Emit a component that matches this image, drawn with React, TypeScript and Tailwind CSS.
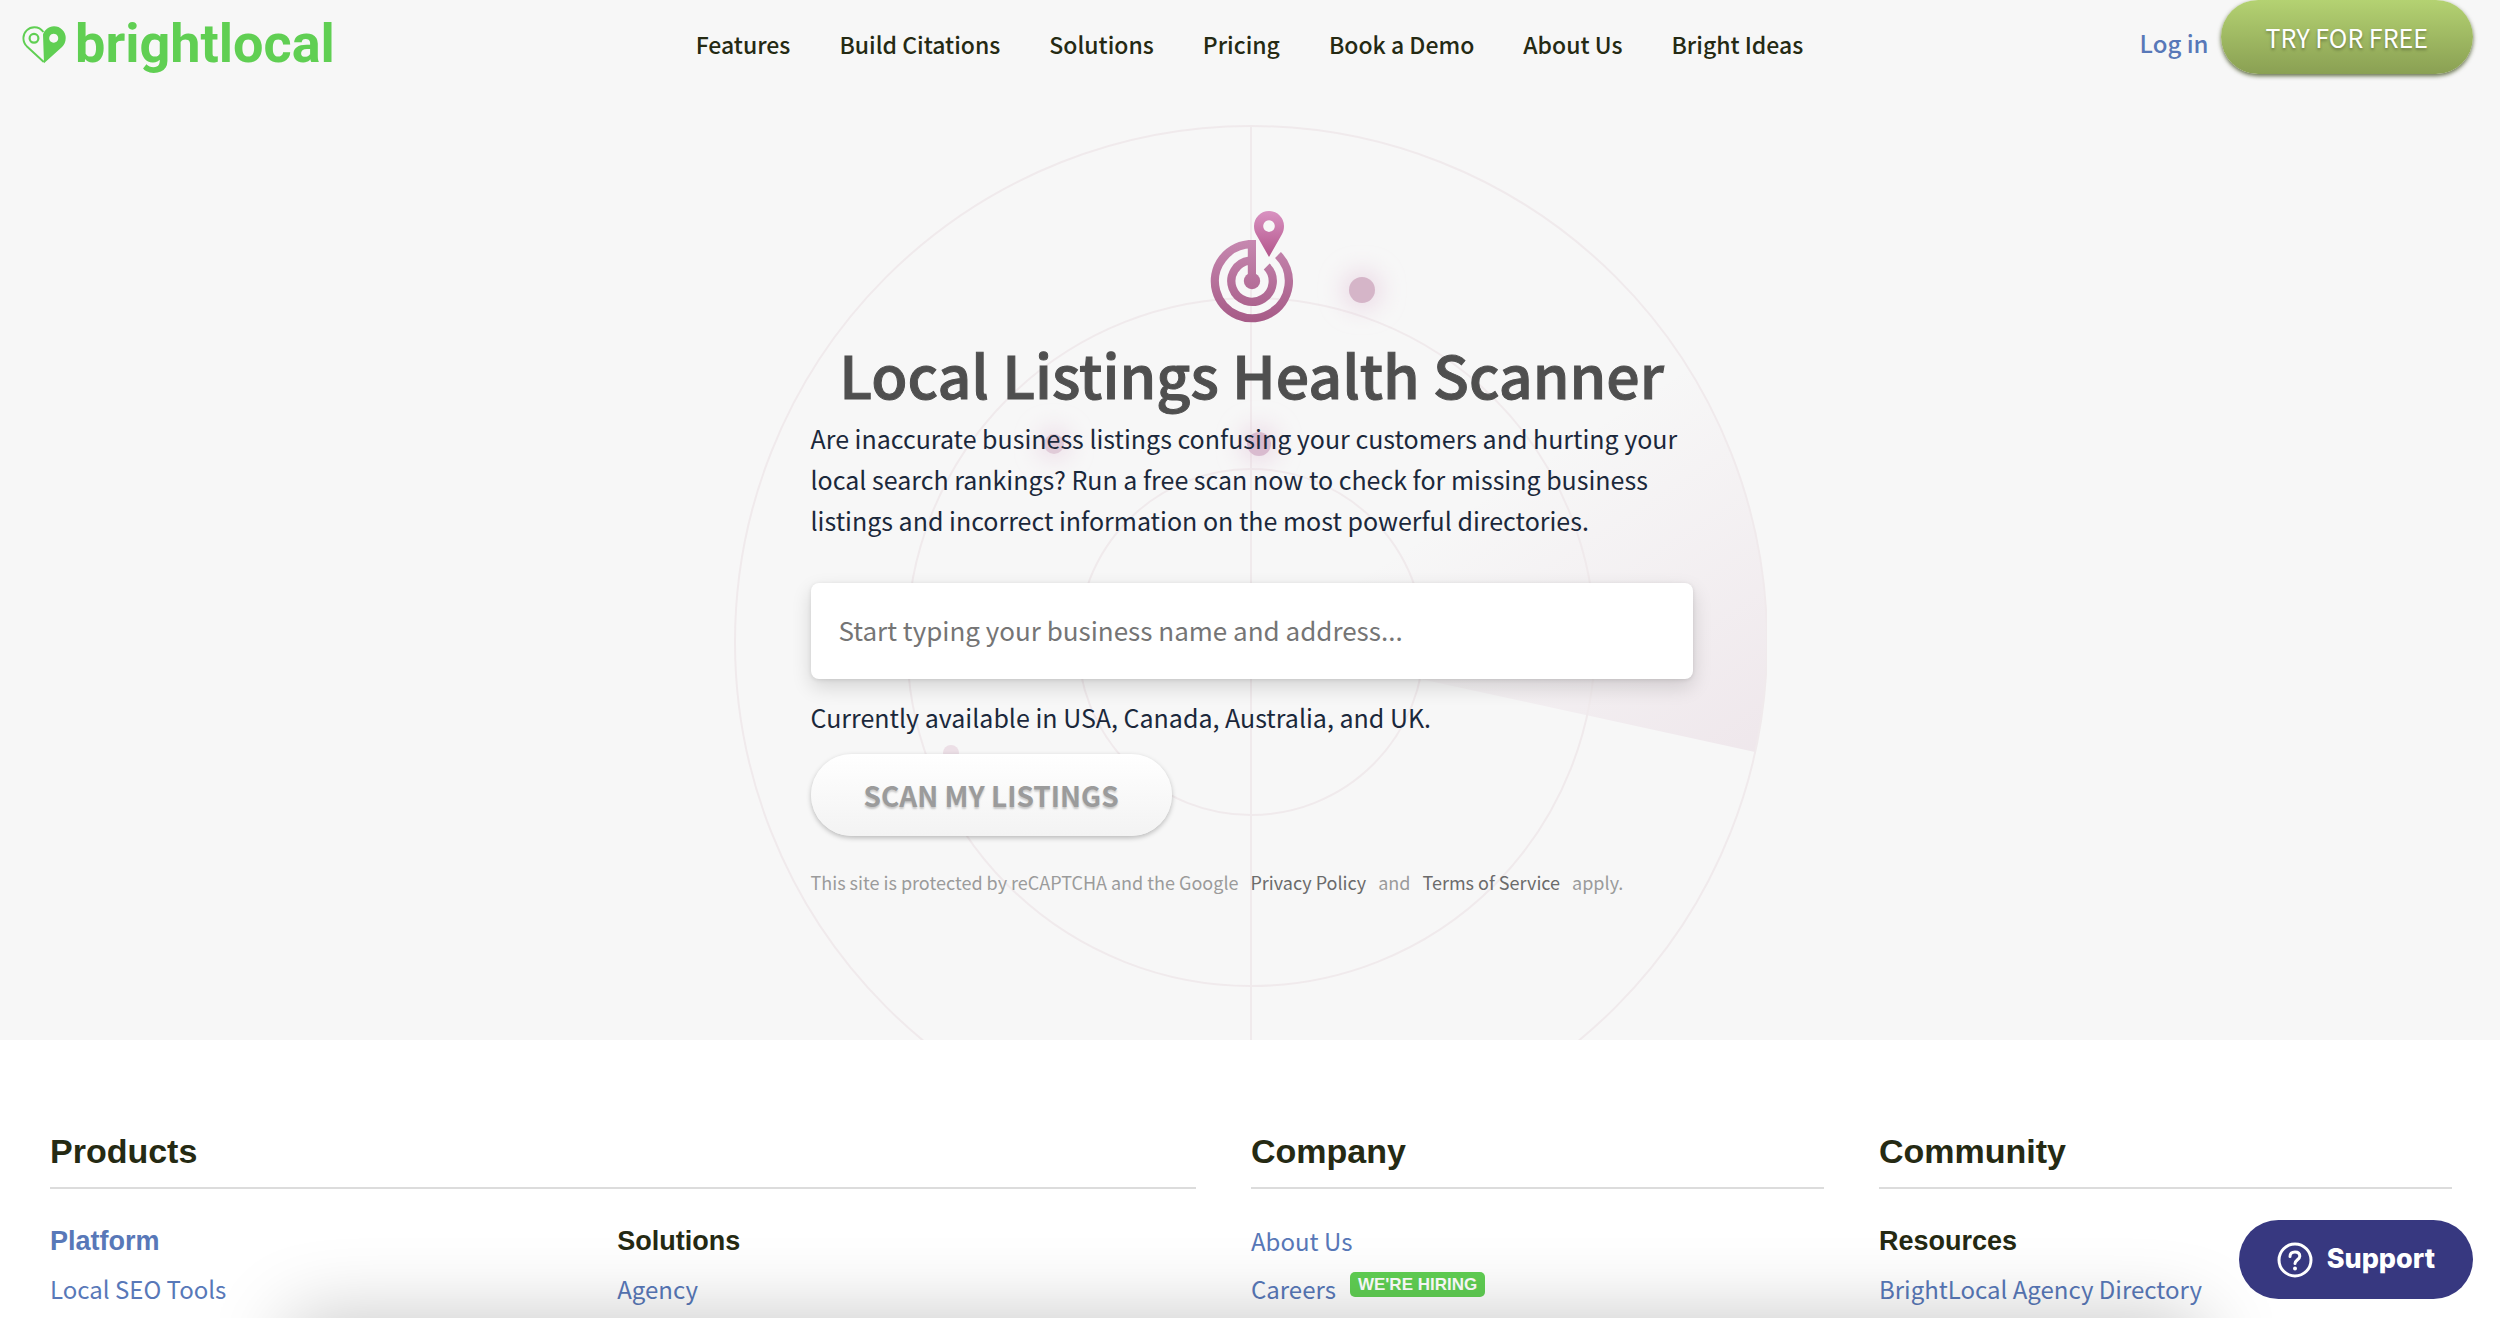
const navItems = ["Features", "Build Citations", "Solutions", "Pricing", "Book a Demo", "About Us", "Bright Ideas"];

function HeartPin() {
  return (
    <svg className="w-[45px] h-[39px]" viewBox="22 24 45 39" fill="none" aria-hidden="true">
      <path
        d="M43.4 31C41 27.6 38 26.2 34.4 26.2A11 11 0 0 0 23.4 37C23.4 41 25 43.5 26.7 45.2L43.8 61"
        stroke="#60cf53"
        strokeWidth="1.9"
      />
      <circle cx="34" cy="37.3" r="4.4" stroke="#60cf53" strokeWidth="2.2" />
      <path
        d="M44 62.3L43 33.5C44.5 29 48.5 25.3 54 25.3A11.7 11.7 0 0 1 65.7 37C65.7 41 64.2 43.7 62 46ZM53.7 32.7a4.5 4.5 0 1 0 0.01 0Z"
        fill="#60cf53"
        fillRule="evenodd"
      />
    </svg>
  );
}

function TargetIcon() {
  return (
    <svg className="w-[84px] h-[114px] mx-auto" viewBox="1209 210 84 114" fill="none" aria-hidden="true">
      <defs>
        <linearGradient id="pin" x1="0" y1="211" x2="0" y2="257" gradientUnits="userSpaceOnUse">
          <stop stopColor="#d992c1" />
          <stop offset="1" stopColor="#b3558b" />
        </linearGradient>
        <linearGradient id="rings" x1="0" y1="240" x2="0" y2="323" gradientUnits="userSpaceOnUse">
          <stop stopColor="#c688b0" />
          <stop offset="1" stopColor="#a65a86" />
        </linearGradient>
      </defs>
      <g stroke="url(#rings)" strokeWidth="8.3">
        <path d="M1255 244.2H1251A37 37 0 1 0 1277 255" />
        <path d="M1248.5 260.6A20.7 20.7 0 1 0 1265.7 266.5" />
      </g>
      <rect x="1246.8" y="240.1" width="8.2" height="41" fill="url(#rings)" />
      <circle cx="1251" cy="281" r="8.2" fill="url(#rings)" />
      <path
        d="M1268 257L1255.2 234.5C1253.7 232 1253 229 1253 226A15 15 0 0 1 1283 226C1283 229 1282.3 232 1280.8 234.5ZM1268 220.3a5.8 5.8 0 1 0 0.01 0Z"
        fill="url(#pin)"
        fillRule="evenodd"
      />
    </svg>
  );
}

function Radar() {
  return (
    <svg
      className="absolute top-[125px] left-1/2 -translate-x-1/2 w-[1034px] h-[1034px]"
      viewBox="-518 -517 1034 1034"
      fill="none"
      aria-hidden="true"
    >
      <defs>
        <linearGradient id="sweep" x1="504" y1="110" x2="307" y2="-197" gradientUnits="userSpaceOnUse">
          <stop stopColor="#a65a86" stopOpacity="0.1" />
          <stop offset="1" stopColor="#a65a86" stopOpacity="0" />
        </linearGradient>
        <filter id="glow" x="-200%" y="-200%" width="500%" height="500%">
          <feGaussianBlur stdDeviation="12" />
        </filter>
      </defs>
      <path d="M0 0L504 110A516 516 0 0 0 434 -279Z" fill="url(#sweep)" />
      <g stroke="#f0eaec" strokeWidth="2">
        <circle r="516" />
        <circle r="344" />
        <circle r="173" />
        <path d="M0 -516V516" />
      </g>
      <g fill="#e3c5d8" fillOpacity="0.6" filter="url(#glow)">
        <circle cx="111" cy="-352" r="19" />
        <circle cx="-197" cy="-198" r="15" />
        <circle cx="8" cy="-198" r="18" />
      </g>
      <circle cx="111" cy="-352" r="13" fill="#d5b5c8" />
      <circle cx="-197" cy="-198" r="10" fill="#e0cbd8" />
      <circle cx="8" cy="-198" r="12" fill="#d9bbcf" />
      <circle cx="-300" cy="111" r="8" fill="#ecdfe6" />
    </svg>
  );
}

function Header() {
  return (
    <header className="relative grid grid-cols-[1fr_auto_1fr] items-center h-[88px] pl-[22px] pr-[27px]">
      <a href="#" className="flex items-center gap-2 text-[#60cf53]">
        <HeartPin />
        <span className="font-['Roboto',sans-serif] font-bold text-[54px] leading-[62px]">brightlocal</span>
      </a>
      <nav className="flex gap-[49px] pl-1 text-[23px] leading-8 font-medium text-[#252a13]">
        {navItems.map((item) => (
          <a key={item} href="#">{item}</a>
        ))}
      </nav>
      <div className="flex justify-end items-center gap-3 self-start">
        <a href="#" className="text-2xl font-medium text-[#5878b8] pt-3">Log in</a>
        <button className="h-[74px] px-[45px] pt-[2px] rounded-full bg-linear-to-b from-[#b4d272] to-[#8aa053] text-[25px] text-white [text-shadow:0_2px_3px_rgba(0,0,0,0.3)] shadow-[0_2px_4px_rgba(60,75,25,0.8)]">
          TRY FOR FREE
        </button>
      </div>
    </header>
  );
}

function Scanner() {
  return (
    <div className="relative pl-[3px]">
      <main className="w-[882px] mx-auto pt-[122px] pb-36 text-[25px] leading-[41px] text-[#1b283b]">
        <TargetIcon />
        <h1 className="mt-[10px] mb-1 text-center text-[59px] leading-[80px] font-medium text-[#4f4f4f] [-webkit-text-stroke:1px_#4f4f4f]">
          Local Listings Health Scanner
        </h1>
        <p>
          Are inaccurate business listings confusing your customers and hurting your local search
          rankings? Run a free scan now to check for missing business listings and incorrect
          information on the most powerful directories.
        </p>
        <form onSubmit={(e) => e.preventDefault()}>
          <input
            type="text"
            aria-label="Business name and address"
            placeholder="Start typing your business name and address..."
            className="block w-full h-24 mt-[42px] px-7 pb-1 rounded-lg bg-white text-[26px] placeholder:text-[#757575] shadow-[0_8px_20px_rgba(0,0,0,0.14),0_1px_4px_rgba(0,0,0,0.1)]"
          />
          <p className="mt-[18px]">Currently available in USA, Canada, Australia, and UK.</p>
          <button
            type="submit"
            className="block h-[82px] mt-4 px-[53px] rounded-full bg-linear-to-b from-white to-[#f3f3f3] text-[28px] font-bold text-[#9b9b9b] [text-shadow:0_2px_2px_rgba(0,0,0,0.2)] shadow-[0_2px_5px_rgba(0,0,0,0.25)]"
          >
            SCAN MY LISTINGS
          </button>
        </form>
        <p className="flex gap-3 mt-8 text-lg leading-7 text-[#9b9b9b]">
          This site is protected by reCAPTCHA and the Google
          <a href="#" className="text-[#6b6b6b]">Privacy Policy</a>
          and
          <a href="#" className="text-[#6b6b6b]">Terms of Service</a>
          apply.
        </p>
      </main>
    </div>
  );
}

const colTitle = "pb-3 border-b-2 border-[#dcdcdc] font-['Liberation_Sans',sans-serif] text-[34px] leading-[48px] font-bold text-[#252a13]";
const listTitle = "font-['Liberation_Sans',sans-serif] text-[27px] font-bold";

function Footer() {
  return (
    <footer className="grid grid-cols-[2fr_1fr_1fr] gap-[55px] pl-[50px] pr-12 pt-[87px] text-2xl leading-[48px] text-[#5878b8]">
      <section>
        <h2 className={colTitle}>Products</h2>
        <div className="grid grid-cols-[99fr_101fr] mt-7">
          <div>
            <h3 className={listTitle}><a href="#">Platform</a></h3>
            <a href="#">Local SEO Tools</a>
          </div>
          <div>
            <h3 className={`${listTitle} text-[#252a13]`}>Solutions</h3>
            <a href="#">Agency</a>
          </div>
        </div>
      </section>
      <section>
        <h2 className={colTitle}>Company</h2>
        <ul className="mt-7">
          <li><a href="#">About Us</a></li>
          <li className="flex gap-[14px]">
            <a href="#">Careers</a>
            <span className="self-start mt-[7px] px-2 rounded-[5px] bg-[#60cf53] font-['Liberation_Sans',sans-serif] text-[17px] leading-[25px] font-bold text-white">
              WE'RE HIRING
            </span>
          </li>
        </ul>
      </section>
      <section>
        <h2 className={colTitle}>Community</h2>
        <div className="mt-7">
          <h3 className={`${listTitle} text-[#252a13]`}>Resources</h3>
          <a href="#">BrightLocal Agency Directory</a>
        </div>
      </section>
    </footer>
  );
}

export default function App() {
  return (
    <div className="relative h-screen overflow-hidden bg-white font-['Noto_Sans_CJK_SC',sans-serif]">
      <div className="relative overflow-hidden bg-[#f7f7f7]">
        <Radar />
        <Header />
        <Scanner />
      </div>
      <Footer />
      <div className="absolute top-full left-[290px] right-[298px] h-40 shadow-[0_0_80px_rgba(0,0,0,0.23)]"></div>
      <button className="fixed right-[27px] bottom-[19px] flex items-center gap-[14px] h-[79px] px-[38px] rounded-full bg-[#373880] text-white font-['Inter',sans-serif] text-[27px] font-extrabold">
        <svg className="w-[36px] h-[36px]" viewBox="0 0 36 36" fill="none" stroke="white" strokeWidth="3" aria-hidden="true">
          <circle cx="18" cy="18" r="16" />
          <path d="M13 14.5C13 11.5 15.2 10 18 10S22.8 11.5 22.8 14.2C22.8 17.5 18 18 18 21.5" strokeLinecap="round" />
          <circle cx="18" cy="26.5" r="2" fill="white" stroke="none" />
        </svg>
        Support
      </button>
    </div>
  );
}
